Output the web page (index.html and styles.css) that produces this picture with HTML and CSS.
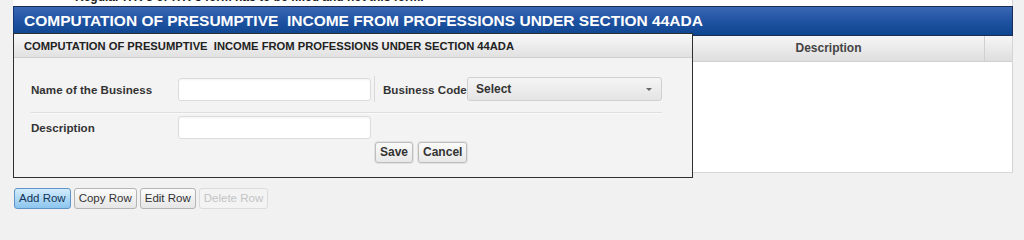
FILE: index.html
```html
<!DOCTYPE html>
<html>
<head>
<meta charset="utf-8">
<link rel="stylesheet" href="styles.css">
</head>
<body>
<div class="page">
  <div class="note"><span>Regular ITR-3 or ITR-5 form has to be filled and not this form.</span></div>
  <div class="titlebar">COMPUTATION OF PRESUMPTIVE&nbsp; INCOME FROM PROFESSIONS UNDER SECTION 44ADA</div>
  <div class="grid">
    <div class="grid-head">
      <div class="col c1"></div>
      <div class="col c2"></div>
      <div class="col c3">Description</div>
      <div class="col c4"></div>
    </div>
    <div class="grid-body"></div>
  </div>
  <div class="actions">
    <button class="btn primary">Add Row</button>
    <button class="btn">Copy Row</button>
    <button class="btn">Edit Row</button>
    <button class="btn disabled">Delete Row</button>
  </div>

  <div class="dialog">
    <div class="dialog-head">COMPUTATION OF PRESUMPTIVE&nbsp; INCOME FROM PROFESSIONS UNDER SECTION 44ADA</div>
    <div class="dialog-body">
      <div class="row">
        <label class="lbl">Name of the Business</label>
        <div class="input"></div>
        <div class="vsep"></div>
        <label class="lbl2">Business Code</label>
        <div class="select"><span>Select</span><i class="caret"></i></div>
      </div>
      <div class="hsep"></div>
      <div class="row">
        <label class="lbl">Description</label>
        <div class="input"></div>
      </div>
      <div class="btnrow">
        <button class="sbtn">Save</button>
        <button class="sbtn">Cancel</button>
      </div>
    </div>
  </div>
</div>
</body>
</html>
```

FILE: styles.css
```css
* { box-sizing: border-box; }
html, body { margin: 0; padding: 0; }
body {
  background: #f1f1f1;
  font-family: "Liberation Sans", Arial, sans-serif;
  width: 1024px;
  height: 216px;
  overflow: hidden;
}
.page {
  position: relative;
  margin-left: 13px;
  width: 1000px;
}
.note {
  height: 6px;
  background: #fff;
  border-right: 1px solid #d4d4d4;
  overflow: hidden;
  position: relative;
}
.note span {
  display: block;
  margin-top: -10px;
  padding-left: 62px;
  font-size: 12px;
  font-weight: bold;
  color: #222;
  line-height: 14px;
}
.titlebar {
  height: 30px;
  background: linear-gradient(#3b67b3, #1f53a2 50%, #0e4590);
  border: 1px solid #1b2c55;
  border-left-color: #163a78;
  color: #fff;
  font-weight: bold;
  font-size: 15.5px;
  line-height: 28px;
  padding-left: 10px;
  white-space: nowrap;
  width: 1000px;
}
.grid {
  width: 1000px;
  height: 137px;
  background: #fff;
  border-right: 1px solid #d4d4d4;
  border-bottom: 1px solid #d8d8d8;
  display: flex;
  flex-direction: column;
}
.grid-head {
  height: 26px;
  display: flex;
  background: linear-gradient(#f6f6f6, #dedede);
  border-bottom: 1px solid #d0d0d0;
}
.col {
  border-right: 1px solid #d0d0d0;
  font-size: 12px;
  font-weight: bold;
  color: #444;
  text-align: center;
  line-height: 25px;
}
.c1 { width: 330px; }
.c2 { width: 330px; }
.c3 { width: 312px; }
.c4 { flex: 1; border-right: none; }
.grid-body { flex: 1; }
.actions {
  display: flex;
  gap: 3px;
  margin-top: 15px;
  padding-left: 1px;
}
.btn {
  height: 21px;
  padding: 0 4px;
  font-family: "Liberation Sans", Arial, sans-serif;
  font-size: 11.5px;
  color: #333;
  background: linear-gradient(#fbfbfb, #e6e6e6);
  border: 1px solid #b4b4b4;
  border-radius: 3px;
  line-height: 19px;
}
.btn.primary {
  background: linear-gradient(#d3ebfc, #8cc5ef);
  border-color: #5f95c6;
  color: #123456;
}
.btn.disabled {
  color: #c4c4c4;
  border-color: #dcdcdc;
  background: #f3f3f3;
}
.dialog {
  position: absolute;
  left: 0;
  top: 33px;
  width: 680px;
  height: 145px;
  border: 1px solid #2e2e2e;
  background: #f3f3f3;
}
.dialog-head {
  height: 24px;
  background: linear-gradient(#f8f8f8, #e1e1e1);
  border-bottom: 1px solid #cfcfcf;
  font-size: 11.2px;
  font-weight: bold;
  color: #222;
  line-height: 24px;
  padding-left: 10px;
  white-space: nowrap;
}
.dialog-body {
  padding: 19px 0 0 17px;
}
.row {
  display: flex;
  align-items: center;
  height: 24px;
}
.lbl {
  width: 147px;
  font-size: 11.6px;
  font-weight: bold;
  color: #333;
}
.lbl2 {
  width: 84px;
  font-size: 11.6px;
  font-weight: bold;
  color: #333;
  white-space: nowrap;
}
.input {
  width: 193px;
  height: 23px;
  background: #fff;
  border: 1px solid #dcdcdc;
  border-radius: 3px;
  box-shadow: inset 0 1px 2px rgba(0,0,0,0.05);
}
.vsep {
  width: 1px;
  height: 26px;
  background: #dadada;
  margin: 0 8px 0 3px;
}
.select {
  width: 195px;
  height: 24px;
  border: 1px solid #d0d0d0;
  border-radius: 3px;
  background: linear-gradient(#f5f5f5, #e4e4e4);
  display: flex;
  align-items: center;
  justify-content: space-between;
  padding: 0 9px 0 8px;
  font-size: 12px;
  font-weight: bold;
  color: #333;
}
.caret {
  width: 0;
  height: 0;
  border-left: 3px solid transparent;
  border-right: 3px solid transparent;
  border-top: 3px solid #666;
}
.hsep {
  width: 631px;
  height: 2px;
  margin: 11px 0 1px 0;
  border-top: 1px solid #dedede;
  border-bottom: 1px solid #fafafa;
}
.btnrow {
  display: flex;
  gap: 5px;
  padding-left: 344px;
  margin-top: 3px;
}
.sbtn {
  height: 21px;
  padding: 0 4px;
  font-family: "Liberation Sans", Arial, sans-serif;
  font-size: 12px;
  font-weight: bold;
  color: #333;
  background: linear-gradient(#fafafa, #e8e8e8);
  border: 1px solid #bdbdbd;
  border-radius: 3px;
  box-shadow: 0 0 0 1px #e2e2e2;
  line-height: 19px;
}
```
